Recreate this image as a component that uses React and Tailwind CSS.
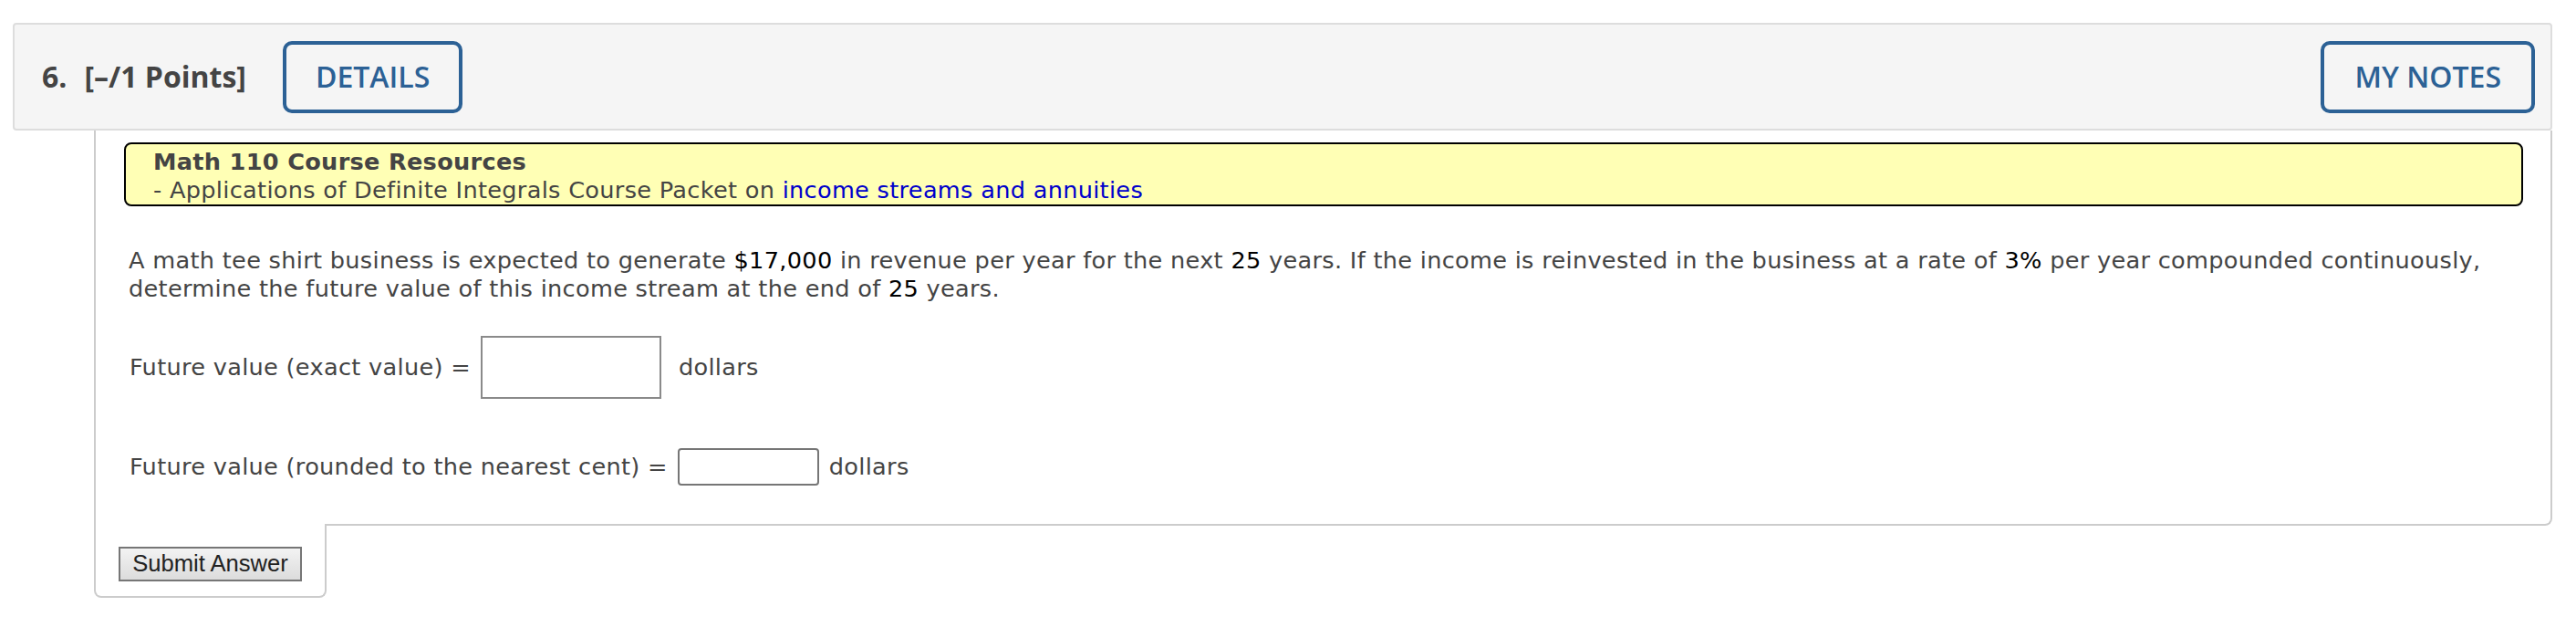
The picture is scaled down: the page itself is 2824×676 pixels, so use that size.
const verdana = "font-['DejaVu_Sans',Verdana,sans-serif] tracking-[0.3px]";

const QuestionHeader = () => (
  <div className="flex h-[118px] items-center justify-between rounded-[4px] border-2 border-[#dddddd] bg-[#f5f5f5] pl-[30px] pr-[17px] font-['Open_Sans',sans-serif] tracking-normal">
    <div className="flex items-center">
      <span className="text-[32px] font-bold text-[#444444]">6.</span>
      <span className="ml-[19px] text-[32px] font-bold text-[#444444]">[–/1 Points]</span>
      <button className="ml-[40px] h-[79px] rounded-[10px] border-4 border-[#2c6195] px-[32px] text-[32px] font-semibold text-[#2c6195]">
        DETAILS
      </button>
    </div>
    <button className="h-[79px] rounded-[10px] border-4 border-[#2c6195] px-[33px] text-[32px] font-semibold text-[#2c6195]">
      MY NOTES
    </button>
  </div>
);

const AnswerRow = ({ label, boxClass, gapAfter }) => (
  <div className="flex items-center pl-[6px] text-[25.6px] leading-[31px] text-[#444444]">
    <span>{label}</span>
    <input type="text" className={boxClass} />
    <span className={gapAfter}>dollars</span>
  </div>
);

export default function App() {
  return (
    <div className={`bg-white pt-[25px] pb-[21px] ${verdana}`}>
      <div className="ml-[14px] mr-[26px]">
        <QuestionHeader />

        <div className="ml-[89px]">
          <div className="rounded-br-[8px] border-x-2 border-b-2 border-[#cccccc] pb-[42px] pl-[31px] pr-[30px] pt-[13px]">
            <div className="rounded-[8px] border-2 border-black bg-[#ffffb5] pl-[30px] pt-[4px] text-[25.6px] leading-[31px] text-[#444444]">
              <div className="font-bold">Math 110 Course Resources</div>
              <div>
                - Applications of Definite Integrals Course Packet on{' '}
                <a href="#" className="text-[#0000cc]">income streams and annuities</a>
              </div>
            </div>

            <p className="mt-[44px] pl-[5px] text-[25.6px] leading-[31px] text-[#444444]">
              A math tee shirt business is expected to generate <span className="text-black">$17,000</span> in revenue per
              year for the next <span className="text-black">25</span> years. If the income is reinvested in the business
              at a rate of <span className="text-black">3%</span> per year compounded continuously, determine the future
              value of this income stream at the end of <span className="text-black">25</span> years.
            </p>

            <div className="mt-[36px]">
              <AnswerRow
                label="Future value (exact value) ="
                boxClass="ml-[11px] h-[69px] w-[198px] border-2 border-[#8a8a8a] bg-white"
                gapAfter="ml-[19px]"
              />
            </div>

            <div className="mt-[54px]">
              <AnswerRow
                label="Future value (rounded to the nearest cent) ="
                boxClass="ml-[11px] h-[41px] w-[155px] rounded-[4px] border-2 border-[#767676] bg-white"
                gapAfter="ml-[11px]"
              />
            </div>
          </div>

          <div className="-mt-[2px] h-[81px] w-[255px] rounded-b-[8px] border-x-2 border-b-2 border-[#cccccc] bg-white pl-[25px] pt-[25px]">
            <button className="h-[38px] w-[201px] border-2 border-[#767676] bg-gradient-to-b from-[#f3f3f3] to-[#dcdcdc] font-['Liberation_Sans',Arial,sans-serif] text-[25.6px] leading-none tracking-normal text-[#222222]">
              Submit Answer
            </button>
          </div>
        </div>
      </div>
    </div>
  );
}
